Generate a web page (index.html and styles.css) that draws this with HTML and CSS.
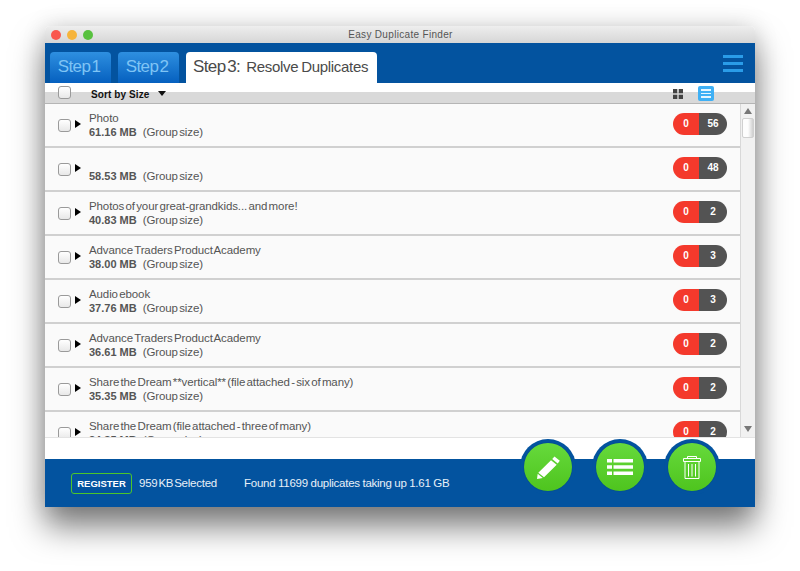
FILE: index.html
```html
<!DOCTYPE html>
<html lang="en">
<head>
<meta charset="utf-8">
<title>Easy Duplicate Finder</title>
<link rel="stylesheet" href="styles.css">
</head>
<body>
<div class="window">
  <div class="titlebar">
    <div class="lights"><span class="light red"></span><span class="light yellow"></span><span class="light green"></span></div>
    <div class="title">Easy Duplicate Finder</div>
  </div>
  <div class="header">
    <div class="tab">Step 1</div>
    <div class="tab tab2">Step 2</div>
    <div class="tab-active"><span class="big">Step 3:</span><span class="sub">Resolve Duplicates</span></div>
    <div class="burger"><i></i><i></i><i></i></div>
  </div>
  <div class="toolbar">
    <span class="check top-check"></span>
    <span class="sort">Sort by Size</span>
    <span class="caret"></span>
    <svg class="grid-icon" width="10" height="10" viewBox="0 0 10 10"><path fill="#444" d="M0 0h4.300v4.300H0zM5.700 0H10v4.300H5.700zM0 5.700h4.300V10H0zM5.700 5.700H10V10H5.700z"/></svg>
    <span class="list-icon"><i></i><i></i><i></i></span>
  </div>
  <div class="main">
    <div class="list">
      <div class="row"><span class="check"></span><span class="arrow"></span><div class="info"><div class="name">Photo</div><div class="size"><b>61.16 MB</b><span>(Group size)</span></div></div><div class="pill"><span class="p0">0</span><span class="pn">56</span></div></div>
      <div class="row"><span class="check"></span><span class="arrow"></span><div class="info"><div class="name">&nbsp;</div><div class="size"><b>58.53 MB</b><span>(Group size)</span></div></div><div class="pill"><span class="p0">0</span><span class="pn">48</span></div></div>
      <div class="row"><span class="check"></span><span class="arrow"></span><div class="info"><div class="name">Photos of your great-grandkids... and more!</div><div class="size"><b>40.83 MB</b><span>(Group size)</span></div></div><div class="pill"><span class="p0">0</span><span class="pn">2</span></div></div>
      <div class="row"><span class="check"></span><span class="arrow"></span><div class="info"><div class="name">Advance Traders Product Academy</div><div class="size"><b>38.00 MB</b><span>(Group size)</span></div></div><div class="pill"><span class="p0">0</span><span class="pn">3</span></div></div>
      <div class="row"><span class="check"></span><span class="arrow"></span><div class="info"><div class="name">Audio ebook</div><div class="size"><b>37.76 MB</b><span>(Group size)</span></div></div><div class="pill"><span class="p0">0</span><span class="pn">3</span></div></div>
      <div class="row"><span class="check"></span><span class="arrow"></span><div class="info"><div class="name">Advance Traders Product Academy</div><div class="size"><b>36.61 MB</b><span>(Group size)</span></div></div><div class="pill"><span class="p0">0</span><span class="pn">2</span></div></div>
      <div class="row"><span class="check"></span><span class="arrow"></span><div class="info"><div class="name">Share the Dream **vertical** (file attached - six of many)</div><div class="size"><b>35.35 MB</b><span>(Group size)</span></div></div><div class="pill"><span class="p0">0</span><span class="pn">2</span></div></div>
      <div class="row"><span class="check"></span><span class="arrow"></span><div class="info"><div class="name">Share the Dream (file attached - three of many)</div><div class="size"><b>34.85 MB</b><span>(Group size)</span></div></div><div class="pill"><span class="p0">0</span><span class="pn">2</span></div></div>
    </div>
    <div class="scrollbar">
      <span class="sb-up"></span>
      <span class="sb-thumb"></span>
      <span class="sb-down"></span>
    </div>
  </div>
  <div class="spacer"></div>
  <div class="footer">
    <span class="register">REGISTER</span>
    <span class="selected">959 KB Selected</span>
    <span class="found">Found 11699 duplicates taking up 1.61 GB</span>
    <div class="actions">
      <div class="action"><div class="disc">
        <svg width="23" height="23" viewBox="0 0 23 23"><path fill="#fff" d="M17.500 0.500L22.800 4.800 20.700 7.500 15.200 3.100zM14 4.300L19.700 8.800 7 21.300 1.300 16.700zM0.700 17.800L5.800 22 0 23z"/></svg>
      </div></div>
      <div class="action"><div class="disc">
        <svg width="26" height="16" viewBox="0 0 26 16"><path fill="#fff" d="M0 0h5v3.600H0zM6.500 0H26v3.600H6.500zM0 6.200h5v3.600H0zM6.500 6.200H26v3.600H6.500zM0 12.400h5V16H0zM6.500 12.400H26V16H6.500z"/></svg>
      </div></div>
      <div class="action"><div class="disc">
        <svg width="18" height="23" viewBox="0 0 18 23"><path fill="none" stroke="#fff" stroke-width="1" d="M4.500 2.500V.5h9v2M.5 2.500h17v3H.5zM2 5.500v17h14v-17"/><path fill="none" stroke="#fff" stroke-width="1" d="M5.500 8v12.500M9 8v12.500M12.500 8v12.500"/></svg>
      </div></div>
    </div>
  </div>
</div>
</body>
</html>
```

FILE: styles.css
```css
* { box-sizing: border-box; }
html, body { margin: 0; height: 571px; overflow: hidden; background: #fff; }
body { padding: 26px 45px 0; font-family: "Liberation Sans", Arial, sans-serif; color: #444; }

.window {
  width: 710px; height: 481px; display: flex; flex-direction: column; position: relative;
  border-radius: 5px 5px 0 0;
  box-shadow: 0 20px 32px rgba(0,0,0,.5), 0 0 24px rgba(0,0,0,.14);
}

.titlebar {
  height: 17px; flex: none; display: flex; align-items: center; position: relative;
  background: linear-gradient(#eeeeee, #d6d6d6);
  border-radius: 5px 5px 0 0;
}
.lights { display: flex; gap: 6px; padding-left: 6px; }
.light { width: 10px; height: 10px; border-radius: 50%; }
.red { background: #f9574f; }
.yellow { background: #f6b43c; }
.green { background: #58c13f; }
.title { flex: 1; text-align: center; font-size: 10px; letter-spacing: .32px; color: #555; margin-left: -47px; }

.header { height: 40px; flex: none; background: #03539f; display: flex; align-items: flex-end; padding-left: 5px; }
.tab {
  width: 61px; height: 31px; margin-right: 7px; padding-right: 3px; border-radius: 4px 4px 0 0;
  background: linear-gradient(#2e8fe0, #0560bf);
  color: #7fc4f5; font-size: 17px; line-height: 29px; text-align: center; letter-spacing: -.6px; word-spacing: -3px;
}
.tab2 { margin-right: 7px; }
.tab-active {
  width: 191px; height: 31px; background: #fff; border-radius: 4px 4px 0 0;
  display: flex; align-items: baseline; padding: 5px 0 0 7px; color: #4a4a4a; white-space: nowrap;
}
.big { font-size: 17px; letter-spacing: -.6px; word-spacing: -2.500px; margin-right: 6px; }
.sub { font-size: 15px; letter-spacing: -.3px; word-spacing: -1px; }
.burger { margin-left: auto; margin-right: 12px; margin-bottom: 11px; width: 20px; display: flex; flex-direction: column; gap: 4px; }
.burger i { display: block; height: 3px; background: #2a9ce8; }

.toolbar {
  height: 21px; flex: none; display: flex; align-items: center; position: relative;
  background: linear-gradient(#fff 0, #fff 9px, #d9d9d9 9px, #d9d9d9 20px, #b5b5b5 20px);
  padding-left: 13px;
}
.check {
  width: 13px; height: 13px; flex: none; border: 1px solid #9a9a9a; border-radius: 3px;
  background: linear-gradient(#ffffff, #e8e8e8);
}
.top-check { margin-top: -3px; }
.sort { font-size: 10px; font-weight: bold; color: #111; margin-left: 20px; margin-top: 1px; letter-spacing: .1px; }
.caret { width: 0; height: 0; margin-left: 9px; margin-top: 0; border-left: 4.500px solid transparent; border-right: 4.500px solid transparent; border-top: 5px solid #111; }
.grid-icon { margin-left: auto; margin-top: 0; }
.list-icon {
  width: 16px; height: 15px; margin: 0 41px 0 15px; border-radius: 2px; background: #3fb0f5;
  display: flex; flex-direction: column; justify-content: center; gap: 2px; padding: 0 3px;
}
.list-icon i { display: block; height: 1.500px; background: #e6f6ff; }

.main { height: 334px; flex: none; display: flex; overflow: hidden; background: #fafafa; border-bottom: 1px solid #e3e3e3; }
.list { flex: 1; overflow: hidden; }
.row {
  height: 44px; display: flex; align-items: center; padding: 0 13px 0 13px;
  background: #fafafa; border-bottom: 2px solid #d0d0d0;
}
.arrow { width: 0; height: 0; margin-left: 4px; margin-top: -2px; border-top: 4px solid transparent; border-bottom: 4px solid transparent; border-left: 6px solid #000; flex: none; }
.info { flex: 1; margin-left: 8px; padding-top: 1px; line-height: 13px; white-space: nowrap; font-size: 11.500px; color: #555; }
.name { letter-spacing: -.1px; word-spacing: -1.800px; height: 14px; }
.size { display: flex; gap: 6px; }
.size b { color: #555; font-size: 11px; letter-spacing: 0; }
.size span { letter-spacing: -.1px; word-spacing: -1.800px; }
.pill { width: 54px; height: 22px; border-radius: 11px; overflow: hidden; display: flex; flex: none; font-size: 10px; font-weight: bold; color: #fff; line-height: 22px; text-align: center; margin-top: -2px; }
.p0 { width: 26px; background: #f4392c; }
.pn { flex: 1; background: #535353; }

.scrollbar { width: 15px; flex: none; background: #f1f1f1; border-left: 1px solid #d8d8d8; display: flex; flex-direction: column; align-items: center; position: relative; }
.sb-up { width: 0; height: 0; margin-top: 4px; border-left: 4px solid transparent; border-right: 4px solid transparent; border-bottom: 6px solid #777; }
.sb-thumb { width: 12px; height: 20px; margin-top: 4px; background: linear-gradient(90deg, #fdfdfd, #fdfdfd 50%, #cfcfcf); border: 1px solid #d0d0d0; border-radius: 2px; }
.sb-down { width: 0; height: 0; margin-top: auto; margin-bottom: 5px; border-left: 4px solid transparent; border-right: 4px solid transparent; border-top: 6px solid #777; }

.spacer { height: 21px; flex: none; background: #fff; }

.footer { height: 48px; flex: none; background: #03539f; display: flex; align-items: center; color: #e8f0f8; font-size: 11.500px; position: relative; padding: 0 0 0 26px; }
.register { width: 61px; height: 21px; border: 1px solid #4cc62a; border-radius: 3px; font-size: 9.500px; font-weight: bold; text-align: center; line-height: 19px; color: #fff; margin-right: 7px; }
.selected { letter-spacing: -.25px; word-spacing: -2px; width: 105px; }
.found { letter-spacing: -.25px; word-spacing: -.3px; }
.actions { position: absolute; right: 35px; top: -20px; display: flex; gap: 16px; }
.action { width: 56px; height: 56px; border-radius: 50%; background: #03539f; display: flex; align-items: center; justify-content: center; }
.disc { width: 48px; height: 48px; border-radius: 50%; background: linear-gradient(#66da3c, #4ec41e); display: flex; align-items: center; justify-content: center; box-shadow: 0 0 1px rgba(0,0,0,.4); }
```
